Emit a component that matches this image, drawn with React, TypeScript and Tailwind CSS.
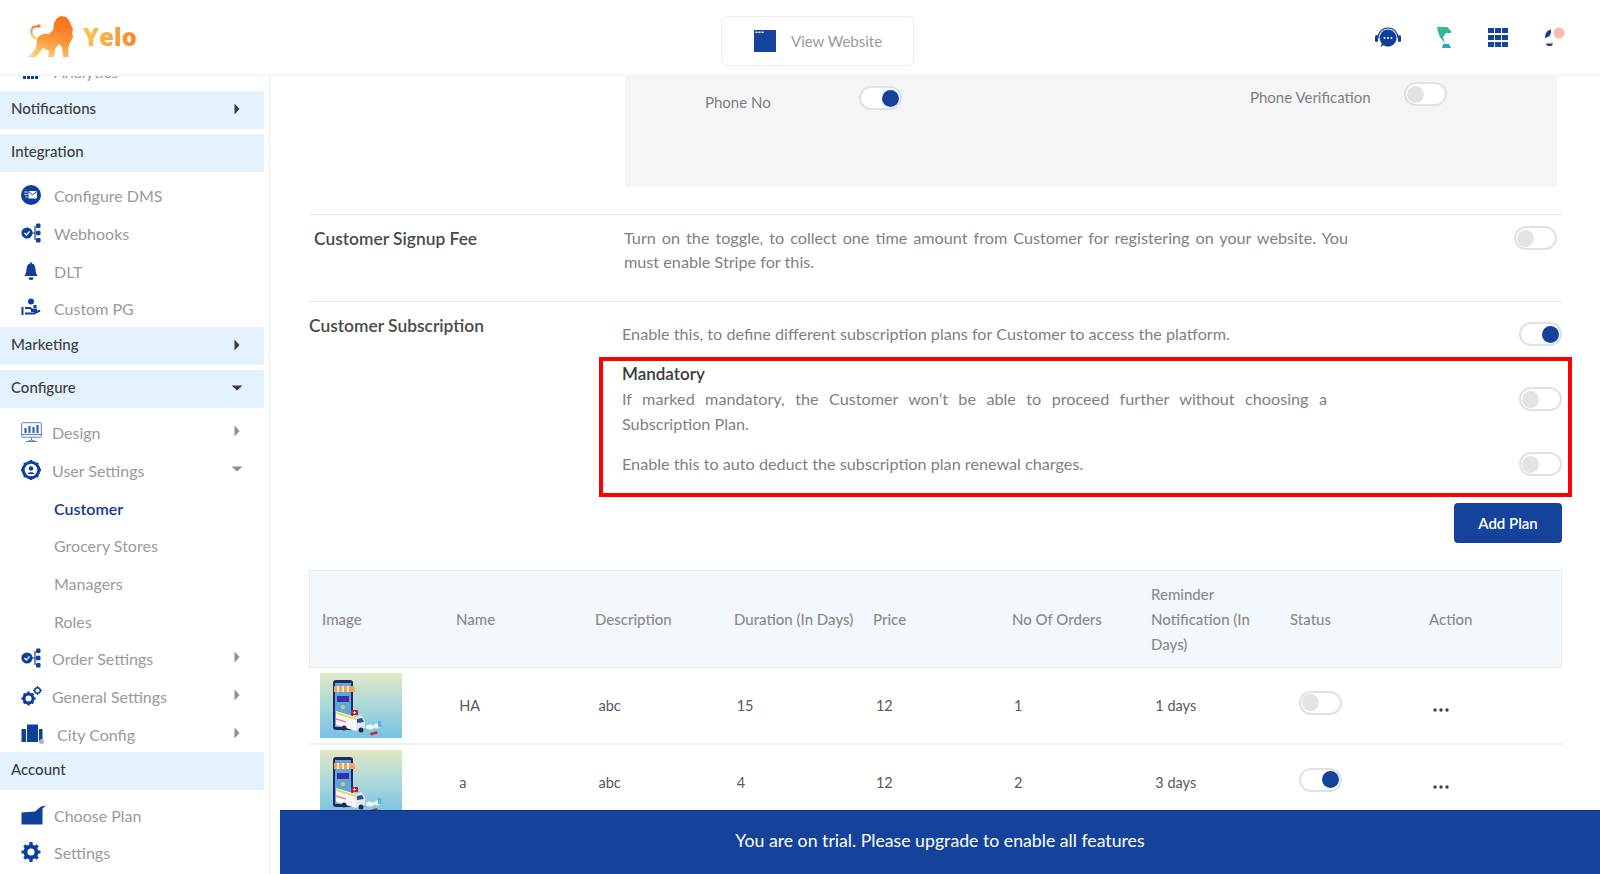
import React from 'react'

function Toggle({ on = false, className = '' }: { on?: boolean; className?: string }) {
  return (
    <div className={`flex h-[24px] w-[43px] shrink-0 items-center rounded-full border-2 border-[#e0e1e3] bg-white px-[1px] ${on ? 'justify-end' : 'justify-start'} ${className}`}>
      <div className={`h-[17px] w-[17px] rounded-full ${on ? 'bg-[#15439b]' : 'bg-[#e2e3e5]'}`} />
    </div>
  )
}

function Caret({ open = false, dark = false }: { open?: boolean; dark?: boolean }) {
  const color = dark ? '#3c3c3c' : '#8f8f8f'
  return (
    <svg width="12" height="12" viewBox="0 0 12 12" className="mb-[2px] shrink-0">
      {open ? <path d="M0.5 3.5h11L6 8.5z" fill={color} /> : <path d="M3.5 0.5v11L8.5 6z" fill={color} />}
    </svg>
  )
}

const BLUE = '#0f3f9c'

const icons: Record<string, React.ReactNode> = {
  dms: (
    <svg width="20" height="20" viewBox="0 0 20 20">
      <circle cx="10" cy="10" r="10" fill={BLUE} />
      <rect x="7.5" y="6" width="8.5" height="7.5" fill="#fff" rx="0.5" />
      <path d="M7.5 6.5l4.2 3.3 4.3-3.3" stroke={BLUE} strokeWidth="1" fill="none" />
      <path d="M3.5 7h3M3.5 9.5h3M4.5 12h2" stroke="#fff" strokeWidth="1" />
    </svg>
  ),
  flow: (
    <svg width="20" height="20" viewBox="0 0 20 20">
      <circle cx="6" cy="10" r="5.6" fill={BLUE} />
      <path d="M3.4 10l2 2 3.2-3.6" stroke="#fff" strokeWidth="1.4" fill="none" />
      <path d="M11 10h3M14 3v14" stroke={BLUE} strokeWidth="1.2" />
      <rect x="15" y="0.5" width="4.5" height="4.5" rx="1.2" fill={BLUE} />
      <rect x="15" y="7.7" width="4.5" height="4.5" rx="1.2" fill={BLUE} />
      <rect x="15" y="15" width="4.5" height="4.5" rx="1.2" fill={BLUE} />
    </svg>
  ),
  bell: (
    <svg width="20" height="20" viewBox="0 0 20 20">
      <path d="M10 0.5l1 2c2.6 0.8 3.4 3 3.5 6 0.1 2.8 1 4.600 2 6.500H3.500c1-1.900 1.900-3.700 2-6.500 0.100-3 0.900-5.200 3.500-6z" fill={BLUE} />
      <path d="M7.500 16.500h5a2.500 2.500 0 0 1-5 0z" fill={BLUE} />
    </svg>
  ),
  pg: (
    <svg width="20" height="20" viewBox="0 0 20 20">
      <circle cx="10" cy="3.500" r="3" fill={BLUE} />
      <rect x="0.500" y="9" width="2" height="8" fill={BLUE} />
      <path d="M4 10h5l2 1.500h4v1.500h-5 M4 15.500h9l6-3" stroke={BLUE} strokeWidth="2" fill="none" />
      <rect x="12.500" y="7" width="3" height="3" fill={BLUE} />
    </svg>
  ),
  design: (
    <svg width="21" height="21" viewBox="0 0 21 21" fill="none" stroke="#4a70bb" strokeWidth="0.9">
      <rect x="0.700" y="0.700" width="19.600" height="14.500" rx="1" />
      <path d="M0.700 12.500h19.600M10.500 15.500v2.500M6.500 19.500l4-1.500 4 1.500M5 19.500h11" />
      <path d="M4.500 11V6M8.500 11V4M12.500 11V5M16.500 11V3" strokeWidth="2.200" stroke="#3c63b0" />
    </svg>
  ),
  user: (
    <svg width="20" height="20" viewBox="0 0 20 20">
      <circle cx="10" cy="10" r="7.800" fill="none" stroke={BLUE} strokeWidth="3" />
      <path d="M10 0v3M10 17v3M0 10h3M17 10h3M3 3l2 2M15 15l2 2M3 17l2-2M15 5l2-2" stroke={BLUE} strokeWidth="2.400" />
      <circle cx="10" cy="8.500" r="2.300" fill={BLUE} />
      <path d="M6.500 14c0.500-2.500 6.500-2.500 7 0z" fill={BLUE} />
    </svg>
  ),
  gears: (
    <svg width="21" height="20" viewBox="0 0 21 20">
      <circle cx="7.500" cy="12.500" r="4.500" fill="none" stroke={BLUE} strokeWidth="3" />
      <path d="M7.500 5.500v3M7.500 16.500v3M0.500 12.500h3M11.500 12.500h3M2.700 7.700l2 2M10.300 15.300l2 2M2.700 17.300l2-2M10.300 9.700l2-2" stroke={BLUE} strokeWidth="2.400" />
      <circle cx="16.500" cy="4.500" r="2.800" fill="none" stroke={BLUE} strokeWidth="1.500" />
      <path d="M16.500 0v1.500M16.500 7.500V9M12 4.500h1.500M19.500 4.500H21" stroke={BLUE} strokeWidth="1.200" />
    </svg>
  ),
  city: (
    <svg width="24" height="20" viewBox="0 0 24 20">
      <rect x="0.500" y="5" width="4.500" height="13" fill={BLUE} />
      <rect x="6" y="0.500" width="11" height="17.500" fill={BLUE} />
      <rect x="18" y="5" width="3.500" height="13" fill={BLUE} />
      <circle cx="20.500" cy="17.500" r="2.500" fill="#9db3dd" />
    </svg>
  ),
  plan: (
    <svg width="25" height="20" viewBox="0 0 25 20">
      <path d="M0.500 7.500L14 6.500 20 1.500 25 0.500 21.500 3.500 21.500 19.500H0.500z" fill={BLUE} />
    </svg>
  ),
  settings: (
    <svg width="20" height="20" viewBox="0 0 20 20">
      <circle cx="10" cy="10" r="5.500" fill="none" stroke={BLUE} strokeWidth="4" />
      <path d="M10 0v4M10 16v4M0.500 10h4M15.500 10h4M3.300 3.300l2.700 2.700M14 14l2.700 2.700M3.300 16.700L6 14M14 6l2.700-2.700" stroke={BLUE} strokeWidth="3.200" />
    </svg>
  ),
}

function SectionBar({ label, caret, open }: { label: string; caret?: boolean; open?: boolean }) {
  return (
    <div className="flex h-[37.500px] w-[264px] items-center justify-between bg-[#e3f2fd] pl-[11px] pr-[21px] text-[15px] font-medium text-[#3d3d3d]">
      <span className="pb-[4px]">{label}</span>
      {caret && <Caret open={open} dark />}
    </div>
  )
}

function NavItem({ icon, label, caret, open, gap = 'w-[33px]' }: { icon?: string; label: string; caret?: boolean; open?: boolean; gap?: string }) {
  return (
    <div className="flex h-[37.700px] w-[264px] items-center pl-[21px] pr-[21px] text-[16px] text-[#9a9a9a]">
      <div className={`flex shrink-0 items-center ${gap}`}>{icon && icons[icon]}</div>
      <span className="flex-1 pt-[2px]">{label}</span>
      {caret && <Caret open={open} />}
    </div>
  )
}

function Sidebar() {
  return (
    <aside className="h-full w-[270px] shrink-0 overflow-hidden border-r border-[#eceef2] bg-white">
      <div className="-mt-[3px] flex h-[18px] items-start overflow-hidden pl-[21px] text-[16px] leading-[6px] text-[#9a9a9a]">
        <svg width="20" height="6" viewBox="0 0 20 6" className="mr-[13px] shrink-0">
          <path d="M2 0h3v6H2zM6 0h3v6H6zM10 0h3v6h-3zM14 0h3v6h-3z" fill={BLUE} />
        </svg>
        <span className="-mt-[9px] leading-[16px]">Analytics</span>
      </div>
      <SectionBar label="Notifications" caret />
      <div className="mt-[5.500px]"><SectionBar label="Integration" /></div>
      <div className="mt-[5px]">
        <NavItem icon="dms" label="Configure DMS" />
        <NavItem icon="flow" label="Webhooks" />
        <NavItem icon="bell" label="DLT" />
        <NavItem icon="pg" label="Custom PG" />
      </div>
      <SectionBar label="Marketing" caret />
      <div className="mt-[5.500px]"><SectionBar label="Configure" caret open /></div>
      <div className="mt-[5.500px]">
        <NavItem icon="design" label="Design" caret gap="w-[31px]" />
        <NavItem icon="user" label="User Settings" caret open gap="w-[31px]" />
        <div className="flex h-[37.700px] items-center pl-[54px] pt-[3px] text-[16px] font-semibold text-[#0f3a94]">Customer</div>
        <NavItem label="Grocery Stores" />
        <NavItem label="Managers" />
        <NavItem label="Roles" />
        <NavItem icon="flow" label="Order Settings" caret gap="w-[31px]" />
        <NavItem icon="gears" label="General Settings" caret gap="w-[31px]" />
        <NavItem icon="city" label="City Config" caret gap="w-[36px]" />
      </div>
      <SectionBar label="Account" />
      <div className="mt-[6px]">
        <NavItem icon="plan" label="Choose Plan" />
        <NavItem icon="settings" label="Settings" />
      </div>
    </aside>
  )
}

function Logo() {
  return (
    <div className="flex items-center">
      <svg width="47" height="44" viewBox="0 0 47 44" className="shrink-0">
        <defs>
          <linearGradient id="lion" x1="0.600" y1="0.100" x2="0.300" y2="1">
            <stop offset="0" stopColor="#f9731c" />
            <stop offset="0.550" stopColor="#fb9a3c" />
            <stop offset="1" stopColor="#fdd07d" />
          </linearGradient>
        </defs>
        <path d="M26 8L29 3 33 1 38 2 41 5 43 10 45 14 44 18 45 22 43 26 41 30 40 36 41 42H35L34 32 31 29 27 34 26 42H20L21 36 15 33 12 37 8 42H0L5 37 8 33 9 25C10 20 15 18 21 19L25 15z" fill="url(#lion)" />
        <path d="M9 24C3 22 2 16 5 12L11 11" stroke="url(#lion)" strokeWidth="1.800" fill="none" />
        <circle cx="11" cy="11" r="1.800" fill="#f9831f" />
      </svg>
      <span className="ml-[8px] bg-gradient-to-r from-[#fdc453] to-[#f9842c] bg-clip-text font-['Open_Sans',sans-serif] text-[24px] font-extrabold leading-none text-transparent">Yelo</span>
    </div>
  )
}

function Header() {
  return (
    <header className="flex h-[76px] shrink-0 items-center border-b border-[#eff1f5] bg-white">
      <div className="w-[721px] pl-[28px] pb-[1px]"><Logo /></div>
      <div className="mt-[6px] flex h-[50px] w-[193px] items-center rounded-md border border-[#ececec] pl-[32px] text-[15px] text-[#9b9b9b]">
        <svg width="22" height="22" viewBox="0 0 22 22" className="mr-[15px] shrink-0">
          <rect width="22" height="22" fill="#15439b" />
          <path d="M1.500 1.500h2v1.500h-2zM4.500 1.500h2v1.500h-2zM7.500 1.500h2v1.500h-2z" fill="#fff" />
        </svg>
        <span className="pt-[2px]">View Website</span>
      </div>
      <div className="ml-[460px] flex items-center">
        <svg width="28" height="28" viewBox="0 0 28 28" className="shrink-0">
          <path d="M4 14a10 10 0 0 1 20 0" stroke={BLUE} strokeWidth="1.200" fill="none" />
          <rect x="1" y="11" width="3" height="7" rx="1.500" fill={BLUE} />
          <rect x="24" y="11" width="3" height="7" rx="1.500" fill={BLUE} />
          <path d="M14 5.500a8.500 8.500 0 1 1-4.500 15.700L6.500 23l1.200-3.500A8.500 8.500 0 0 1 14 5.500z" fill={BLUE} />
          <circle cx="10.500" cy="14" r="1" fill="#fff" /><circle cx="14" cy="14" r="1" fill="#fff" /><circle cx="17.500" cy="14" r="1" fill="#fff" />
        </svg>
        <svg width="16" height="22" viewBox="0 0 16 22" className="ml-[35px] shrink-0">
          <defs>
            <linearGradient id="leaf" x1="0" y1="0" x2="0.500" y2="1">
              <stop offset="0" stopColor="#3fc27d" />
              <stop offset="1" stopColor="#21a7b5" />
            </linearGradient>
          </defs>
          <path d="M0 0H10L14 4V6H9L6 10L8 16L3 10L1 5z" fill="url(#leaf)" />
          <path d="M6 17H12L14 21H5z" fill="#2aa9bb" />
        </svg>
        <div className="ml-[35px] grid w-[20px] grid-cols-3 gap-[1.500px]">
          {Array.from({ length: 9 }).map((_, i) => <div key={i} className="h-[5.500px] bg-[#15439b]" />)}
        </div>
        <svg width="22" height="24" viewBox="0 0 22 24" className="ml-[36px] shrink-0">
          <circle cx="15" cy="7" r="5.500" fill="#f8bcae" />
          <path d="M1 12C1 7 3 4.500 7 3.500C7.500 7.500 6 11 1 12z" fill={BLUE} />
          <path d="M2 17.500h7c-0.500 2-1.500 2.500-3.500 2.500S2.500 19.500 2 17.500z" fill={BLUE} />
        </svg>
      </div>
    </header>
  )
}

function Thumb({ id }: { id: string }) {
  return (
    <svg width="82" height="65" viewBox="0 0 82 65" className="shrink-0">
      <defs>
        <linearGradient id={id} x1="0" y1="0" x2="0" y2="1">
          <stop offset="0" stopColor="#e2e8c4" />
          <stop offset="0.450" stopColor="#afdad8" />
          <stop offset="1" stopColor="#77c1e3" />
        </linearGradient>
      </defs>
      <rect width="82" height="65" fill={`url(#${id})`} />
      <rect x="13" y="7" width="20" height="50" rx="3" fill="#2a2560" />
      <rect x="15" y="10" width="16" height="44" fill="#5aa9dc" />
      <path d="M14 13h20l1.500 6H14z" fill="#f0a25c" />
      <path d="M18 13v6M23 13v6M28 13v6" stroke="#fff" strokeWidth="1.500" />
      <rect x="17" y="23" width="12" height="6" fill="#3d2ea4" />
      <circle cx="23" cy="34" r="2" fill="#e5c84a" />
      <path d="M16 38L36 44V58L16 52z" fill="#f5f7fa" />
      <path d="M16 39L36 45V47L16 41z" fill="#f1d548" />
      <path d="M16 46l10 3" stroke="#e58a8a" strokeWidth="1.500" />
      <path d="M36 44L41 42L45 47V55L36 58z" fill="#dfe8f3" />
      <path d="M37 46L42 45L44 49L37 50z" fill="#33507c" />
      <rect x="31" y="37" width="7" height="5" fill="#b81f2a" />
      <path d="M34.500 38v3M33 39.500h3" stroke="#fff" strokeWidth="0.800" />
      <circle cx="24" cy="55" r="2.500" fill="#252a50" />
      <circle cx="41" cy="57" r="2.500" fill="#252a50" />
      <ellipse cx="50" cy="54" rx="4" ry="2.500" fill="#f4f7fb" />
      <ellipse cx="57" cy="53" rx="3" ry="2.500" fill="#f4f7fb" />
      <rect x="58" y="48" width="3.500" height="6" fill="#5fb5e0" />
      <path d="M50 60l7-2 1 2.500-7 2z" fill="#cc2a3c" />
    </svg>
  )
}

const COLS = 'grid grid-cols-9 w-full'

function Dots() {
  return (
    <svg width="16" height="4" viewBox="0 0 16 4">
      <circle cx="2" cy="2" r="1.700" fill="#3a3f4a" />
      <circle cx="8" cy="2" r="1.700" fill="#3a3f4a" />
      <circle cx="14" cy="2" r="1.700" fill="#3a3f4a" />
    </svg>
  )
}

function PlanRow({ id, name, duration, orders, days, on }: { id: string; name: string; duration: string; orders: string; days: string; on?: boolean }) {
  return (
    <div className={`${COLS} h-[77px] items-center border-b-2 border-[#edf0f4] text-[14.500px] text-[#595959]`}>
      <div className="pl-[11px]"><Thumb id={id} /></div>
      <div className="pl-[11px]">{name}</div>
      <div className="pl-[11px]">abc</div>
      <div className="pl-[10px]">{duration}</div>
      <div className="pl-[10px]">12</div>
      <div className="pl-[9px]">{orders}</div>
      <div className="pl-[11px]">{days}</div>
      <div className="pl-[15px] pb-[6px]"><Toggle on={on} /></div>
      <div className="pl-[10px] pt-[8px]"><Dots /></div>
    </div>
  )
}

function PlansTable() {
  const th = 'pl-[7px] font-medium'
  return (
    <div className="mt-[27px] w-full">
      <div className={`${COLS} h-[98px] items-center border border-[#e3eaf1] bg-[#f3f8fc] text-[15px] text-[#8a8a8a]`}>
        <div className="pl-[12px] font-medium">Image</div>
        <div className={th}>Name</div>
        <div className={th}>Description</div>
        <div className={`${th} whitespace-nowrap`}>Duration (In Days)</div>
        <div className={th}>Price</div>
        <div className={th}>No Of Orders</div>
        <div className={`${th} leading-[25px]`}>Reminder Notification (In Days)</div>
        <div className={th}>Status</div>
        <div className={th}>Action</div>
      </div>
      <PlanRow id="thumb1" name="HA" duration="15" orders="1" days="1 days" />
      <PlanRow id="thumb2" name="a" duration="4" orders="2" days="3 days" on />
    </div>
  )
}

export default function App() {
  return (
    <div className="relative flex h-screen w-full flex-col overflow-hidden bg-white font-['Lato','Open_Sans',sans-serif]">
      <Header />
      <div className="flex min-h-0 flex-1">
        <Sidebar />
        <main className="min-w-0 flex-1 overflow-hidden pl-[39px] pr-[38px]">
          <div className="ml-[316px] mr-[5px] flex h-[111px] bg-[#f4f5f7] text-[15px] text-[#7f7f7f]">
            <div className="flex w-[625px] items-start pl-[80px] pt-[10px]">
              <span className="mt-[5px] w-[154px]">Phone No</span>
              <Toggle on />
            </div>
            <div className="flex items-start pt-[6px]">
              <span className="mt-[4px] w-[154px] whitespace-nowrap">Phone Verification</span>
              <Toggle />
            </div>
          </div>

          <div className="mt-[27px] flex h-[88px] border-y border-[#e4e4e4] pr-[5px]">
            <div className="w-[315px] pl-[5px] pt-[12px] text-[17.400px] font-semibold leading-[24px] text-[#4a4a4a]">Customer Signup Fee</div>
            <p className="w-[724px] pt-[11px] text-justify text-[16.200px] leading-[24px] text-[#7f7f7f]">
              Turn on the toggle, to collect one time amount from Customer for registering on your website. You must enable Stripe for this.
            </p>
            <Toggle className="ml-auto mt-[11px]" />
          </div>

          <div className="flex">
            <div className="w-[290px] pt-[12px] text-[17.400px] font-semibold leading-[24px] text-[#4a4a4a]">Customer Subscription</div>
            <div className="min-w-0 flex-1">
              <div className="flex items-center justify-between pl-[23px] pt-[20px] text-[16.200px] leading-[24px] text-[#7f7f7f]">
                <span>Enable this, to define different subscription plans for Customer to access the platform.</span>
                <Toggle on />
              </div>
              <div className="-mr-[10px] mt-[11px] h-[140px] border-4 border-[#ff0000] pl-[19px] pr-[6px] text-[16.200px] leading-[24.500px] text-[#7f7f7f]">
                <div className="pt-[2px] text-[17px] font-semibold leading-[22px] text-[#3a3a3a]">Mandatory</div>
                <div className="mt-[2px] flex items-start justify-between">
                  <p className="w-[705px] text-justify">If marked mandatory, the Customer won’t be able to proceed further without choosing a Subscription Plan.</p>
                  <Toggle />
                </div>
                <div className="mt-[16px] flex items-center justify-between">
                  <span>Enable this to auto deduct the subscription plan renewal charges.</span>
                  <Toggle />
                </div>
              </div>
              <div className="mt-[6px] flex justify-end">
                <button className="h-[40px] w-[108px] rounded bg-[#15439b] text-[15px] font-semibold text-white">Add Plan</button>
              </div>
            </div>
          </div>

          <PlansTable />
        </main>
      </div>
      <div className="absolute bottom-0 left-[280px] right-0 flex h-[64px] items-center justify-center border-t border-[#0b2f86] bg-[#15439b] pb-[2px] text-[17.700px] text-white">
        You are on trial. Please upgrade to enable all features
      </div>
    </div>
  )
}
